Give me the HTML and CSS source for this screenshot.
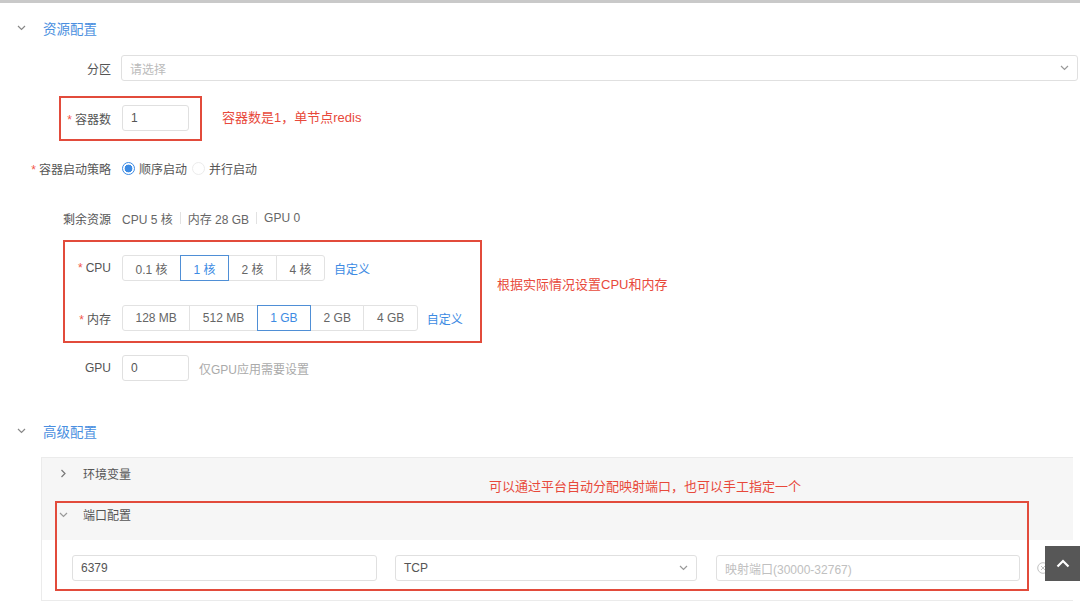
FILE: index.html
```html
<!DOCTYPE html>
<html>
<head>
    <title>资源配置</title>
    <link rel="stylesheet" href="styles.css">
</head>
<body>
    <div class="page">
        <div class="section-title">
            <svg class="chev" width="9" height="6" viewBox="0 0 9 6"><path d="M1 1l3.5 3.5L8 1" fill="none" stroke="#888" stroke-width="1.2"/></svg>
            <span>资源配置</span>
        </div>

        <div class="form">
            <div class="form-row">
                <div class="form-label">分区</div>
                <div class="select select-wide">
                    <span class="placeholder">请选择</span>
                    <svg width="9" height="6" viewBox="0 0 9 6"><path d="M1 1l3.5 3.5L8 1" fill="none" stroke="#999" stroke-width="1.2"/></svg>
                </div>
            </div>

            <div class="form-row">
                <div class="form-label required">容器数</div>
                <div class="input input-small">1</div>
            </div>

            <div class="form-row">
                <div class="form-label required">容器启动策略</div>
                <div class="radio checked"></div><span class="radio-text">顺序启动</span>
                <div class="radio"></div><span class="radio-text">并行启动</span>
            </div>

            <div class="form-row">
                <div class="form-label">剩余资源</div>
                <span class="stat">CPU 5 核</span><span class="divider"></span>
                <span class="stat">内存 28 GB</span><span class="divider"></span>
                <span class="stat">GPU 0</span>
            </div>

            <div class="form-row">
                <div class="form-label required">CPU</div>
                <div class="btn-group">
                    <span class="btn">0.1 核</span>
                    <span class="btn active">1 核</span>
                    <span class="btn">2 核</span>
                    <span class="btn">4 核</span>
                </div>
                <span class="link">自定义</span>
            </div>

            <div class="form-row">
                <div class="form-label required">内存</div>
                <div class="btn-group">
                    <span class="btn">128 MB</span>
                    <span class="btn">512 MB</span>
                    <span class="btn active">1 GB</span>
                    <span class="btn">2 GB</span>
                    <span class="btn">4 GB</span>
                </div>
                <span class="link">自定义</span>
            </div>

            <div class="form-row">
                <div class="form-label">GPU</div>
                <div class="input input-small">0</div>
                <span class="hint">仅GPU应用需要设置</span>
            </div>
        </div>

        <div class="section-title section-adv">
            <svg class="chev" width="9" height="6" viewBox="0 0 9 6"><path d="M1 1l3.5 3.5L8 1" fill="none" stroke="#888" stroke-width="1.2"/></svg>
            <span>高级配置</span>
        </div>

        <div class="collapse">
            <div class="collapse-head">
                <svg class="head-icon" width="6" height="9" viewBox="0 0 6 9"><path d="M1 1l3.5 3.5L1 8" fill="none" stroke="#777" stroke-width="1.2"/></svg>
                <span>环境变量</span>
            </div>
            <div class="collapse-head">
                <svg class="head-icon" width="9" height="6" viewBox="0 0 9 6"><path d="M1 1l3.5 3.5L8 1" fill="none" stroke="#999" stroke-width="1.2"/></svg>
                <span>端口配置</span>
            </div>
            <div class="collapse-body">
                <div class="input port-field">6379</div>
                <div class="select port-field port-select">
                    <span>TCP</span>
                    <svg width="9" height="6" viewBox="0 0 9 6"><path d="M1 1l3.5 3.5L8 1" fill="none" stroke="#999" stroke-width="1.2"/></svg>
                </div>
                <div class="input port-field placeholder">映射端口(30000-32767)</div>
                <svg class="clear-icon" width="12" height="12" viewBox="0 0 12 12"><circle cx="6" cy="6" r="5.3" fill="none" stroke="#bbb" stroke-width="0.9"/><path d="M4 4l4 4M8 4l-4 4" stroke="#bbb" stroke-width="0.9"/></svg>
            </div>
        </div>

        <!-- 标注 -->
        <div class="mark mark-count"></div>
        <div class="mark mark-res"></div>
        <div class="mark mark-port"></div>
        <div class="note note-count">容器数是1，单节点redis</div>
        <div class="note note-res">根据实际情况设置CPU和内存</div>
        <div class="note note-port">可以通过平台自动分配映射端口，也可以手工指定一个</div>

        <div class="back-top">
            <svg width="14" height="9" viewBox="0 0 14 9"><path d="M1.5 7.5L7 2l5.5 5.5" fill="none" stroke="#fff" stroke-width="2.2"/></svg>
        </div>
    </div>
</body>
</html>
```

FILE: styles.css
```css
html, body {
    margin: 0;
    padding: 0;
    background: #fff;
}

body {
    font-family: "Liberation Sans", "Noto Sans CJK SC", sans-serif;
    font-size: 12px;
    color: #555;
    overflow: hidden;
}

.page {
    position: relative;
    height: 603px;
    border-top: 3px solid #c9c9c9;
    box-sizing: border-box;
    overflow: hidden;
}

.section-title {
    display: flex;
    align-items: center;
    height: 20px;
    margin-top: 15px;
    padding-left: 17px;
    font-size: 13.5px;
    color: #4a8fe0;
}

.section-title .chev {
    margin-right: 17px;
}

.section-adv {
    margin-top: 40px;
}

.form {
    margin-top: 17px;
}

.form-row {
    display: flex;
    align-items: center;
    height: 26px;
    margin-bottom: 24px;
}

.form-row:last-child {
    margin-bottom: 0;
}

.form-label {
    width: 111px;
    flex-shrink: 0;
    text-align: right;
    margin-right: 11px;
    color: #555;
}

.form-label.required::before {
    content: "*";
    color: #f2564a;
    margin-right: 3px;
}

.select,
.input {
    height: 26px;
    box-sizing: border-box;
    border: 1px solid #e0e0e0;
    border-radius: 3px;
    display: flex;
    align-items: center;
    padding: 0 8px;
    color: #555;
    background: #fff;
}

.select {
    justify-content: space-between;
}

.select-wide {
    flex: 1;
    margin-right: 2px;
    margin-left: -1px;
}

.placeholder {
    color: #bbb;
}

.input-small {
    width: 67px;
}

.radio {
    width: 13px;
    height: 13px;
    box-sizing: border-box;
    border: 1px solid #ececec;
    border-radius: 50%;
    margin-right: 4px;
}

.radio.checked {
    border: 1px solid #3d8be3;
    background: radial-gradient(circle, #3d8be3 0, #3d8be3 3.6px, #fff 4.2px);
}

.radio-text {
    margin-right: 5px;
    color: #555;
}

.stat {
    color: #666;
}

.divider {
    width: 1px;
    height: 12px;
    background: #e2e2e2;
    margin: 0 7px;
}

.btn-group {
    display: flex;
    height: 26px;
}

.btn {
    display: flex;
    align-items: center;
    padding: 0 12.5px;
    border: 1px solid #e2e2e2;
    margin-left: -1px;
    color: #666;
    background: #fff;
}

.btn:first-child {
    margin-left: 0;
    border-radius: 3px 0 0 3px;
}

.btn:last-child {
    border-radius: 0 3px 3px 0;
}

.btn.active {
    border-color: #4f8fd6;
    color: #3d8be3;
    position: relative;
}

.link {
    margin-left: 9px;
    color: #3d8be3;
}

.hint {
    margin-left: 10px;
    color: #aaa;
}

.collapse {
    margin-top: 16px;
    margin-left: 41px;
    margin-right: 7px;
    border: 1px solid #ebebeb;
    border-right: none;
    background: #f6f6f6;
}

.collapse-head {
    display: flex;
    align-items: center;
    height: 41px;
    box-sizing: border-box;
    padding: 0 0 10px 17px;
    color: #555;
}

.head-icon {
    width: 9px;
    margin-right: 15px;
}

.collapse-body {
    display: flex;
    align-items: center;
    background: #fff;
    height: 60px;
    box-sizing: border-box;
    padding: 0 0 4px 30px;
}

.port-field {
    width: 305px;
    margin-right: 18px;
}

.port-select {
    width: 302px;
    margin-right: 19px;
}

.port-field.placeholder {
    width: 304px;
    color: #c0c0c0;
}

.clear-icon {
    margin-left: -1px;
}

.mark {
    position: absolute;
    border: 2px solid #e24b3b;
    box-sizing: border-box;
}

.mark-count {
    left: 59px;
    top: 93px;
    width: 143px;
    height: 45px;
}

.mark-res {
    left: 63px;
    top: 237px;
    width: 419px;
    height: 103px;
}

.mark-port {
    left: 55px;
    top: 498px;
    width: 974px;
    height: 90px;
}

.note {
    position: absolute;
    color: #e8493b;
    font-size: 13px;
    line-height: 18px;
}

.note-count {
    left: 222px;
    top: 106px;
}

.note-res {
    left: 497px;
    top: 273px;
}

.note-port {
    left: 489px;
    top: 475px;
}

.back-top {
    position: absolute;
    right: 0;
    top: 543px;
    width: 35px;
    height: 35px;
    background: #575757;
    display: flex;
    align-items: center;
    justify-content: center;
}
```
